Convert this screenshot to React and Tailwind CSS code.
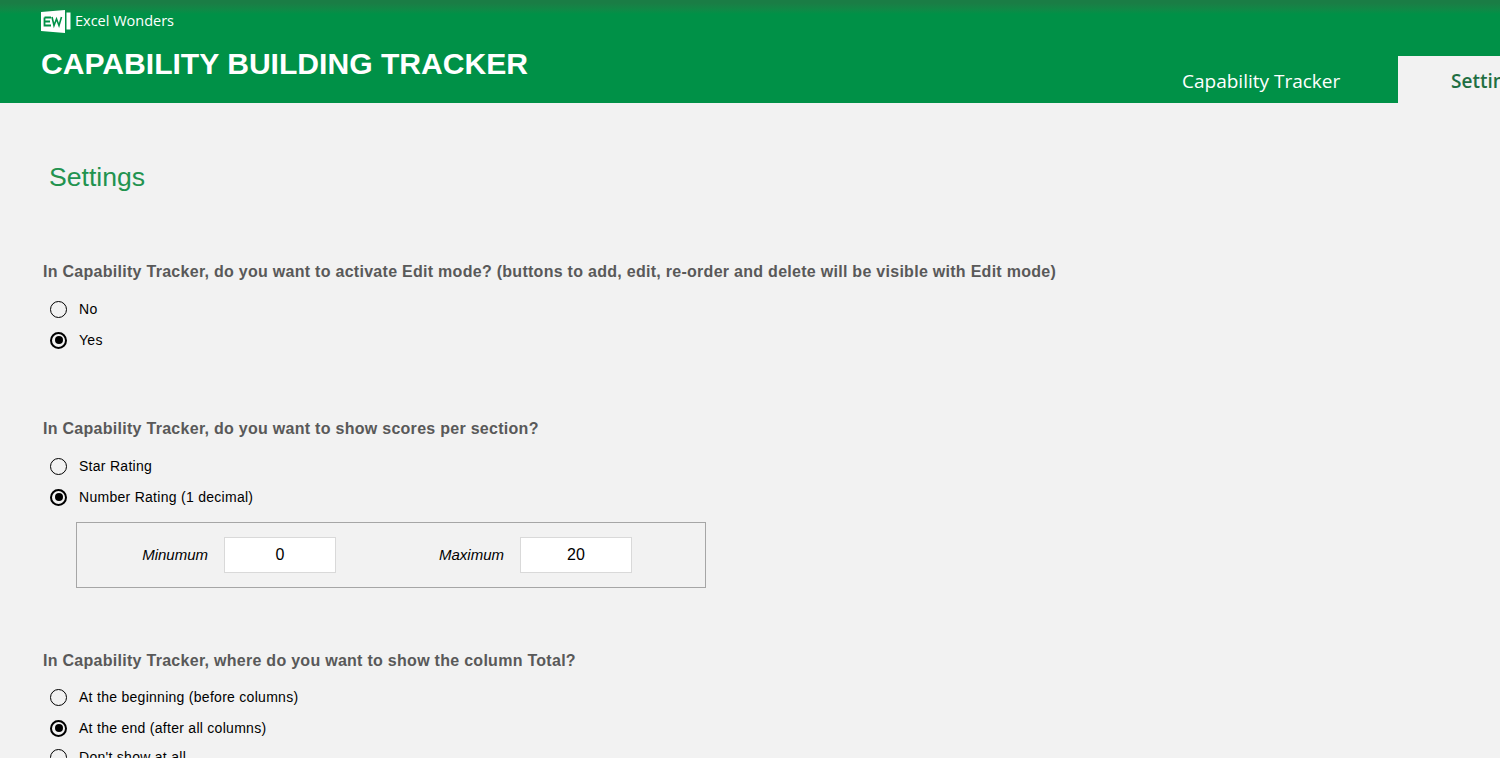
const font = { fontFamily: '"Liberation Sans", Arial, sans-serif' };

function Radio({ label, checked }) {
  return (
    <div className="flex items-center h-[20px]">
      <span
        className={`w-[17px] h-[17px] rounded-full border-black flex items-center justify-center ${checked ? 'border-2' : 'border-[1.5px]'}`}
      >
        {checked && <span className="w-[8px] h-[8px] rounded-full bg-black" />}
      </span>
      <span className="ml-[12px] text-[14px] tracking-[0.28px] leading-[20px] text-black">{label}</span>
    </div>
  );
}

function RadioGroup({ options, selected, className }) {
  return (
    <div className={`flex flex-col gap-[11px] pl-[50px] ${className}`}>
      {options.map((o) => (
        <Radio key={o} label={o} checked={o === selected} />
      ))}
    </div>
  );
}

function Question({ children, className }) {
  return (
    <h2 className={`pl-[43px] text-[16px] tracking-[0.28px] leading-[20px] font-bold text-[#595959] ${className}`}>
      {children}
    </h2>
  );
}

function NumberBox({ value }) {
  return (
    <div className="w-[112px] h-[36px] bg-white border border-[#d9d9d9] flex items-center justify-center not-italic text-[16px] text-black">
      {value}
    </div>
  );
}

export default function App() {
  return (
    <div className="w-[1500px] h-[758px] overflow-hidden bg-[#f2f2f2]" style={font}>
      <header className="h-[103px] bg-gradient-to-b from-[#1a7d45] from-[3px] to-[#009147] to-[14px] flex flex-col">
        <div className="flex items-center pl-[41px] pt-[9px] h-[33px]">
          <svg width="30" height="23" viewBox="0 0 30 23">
            <path d="M0 2 L24 0 V23 L0 21 Z" fill="#fff" />
            <path d="M25.5 2.5 H29.5 V19.5 H25.5 Z" fill="#fff" />
            <path d="M3.5 7.5 H10 M3.5 7.5 V15.5 H10 M3.5 11.5 H9" stroke="#009147" strokeWidth="1.8" fill="none" />
            <path d="M11 7 L13 15.5 L15.5 9 L18 15.5 L20.5 7" stroke="#009147" strokeWidth="1.6" fill="none" />
          </svg>
          <span className="ml-[4px] text-[14.5px] leading-[20px] text-white" style={{ fontFamily: '"Open Sans", sans-serif' }}>
            Excel Wonders
          </span>
        </div>
        <div className="flex flex-1 items-end justify-between">
          <h1 className="pl-[41px] pb-[21px] text-[30.1px] leading-[36px] font-bold text-white">CAPABILITY BUILDING TRACKER</h1>
          <nav className="flex h-[47px] w-[318px] shrink-0 text-[19px]" style={{ fontFamily: '"Open Sans", sans-serif' }}>
            <div className="w-[216px] pt-[11px] flex items-start text-white">Capability Tracker</div>
            <div className="flex-1 bg-[#f2f2f2] pl-[53px] pt-[11px] flex items-start font-semibold text-[#1f6f43] overflow-hidden whitespace-nowrap">
              Settings
            </div>
          </nav>
        </div>
      </header>

      <main>
        <h2 className="pl-[49px] mt-[56px] text-[26.6px] leading-[36px] text-[#22934f]">Settings</h2>

        <Question className="mt-[67px]">
          In Capability Tracker, do you want to activate Edit mode? (buttons to add, edit, re-order and delete will be visible with Edit mode)
        </Question>
        <RadioGroup className="mt-[17px]" options={['No', 'Yes']} selected="Yes" />

        <Question className="mt-[69px]">In Capability Tracker, do you want to show scores per section?</Question>
        <RadioGroup className="mt-[17px]" options={['Star Rating', 'Number Rating (1 decimal)']} selected="Number Rating (1 decimal)" />

        <div className="ml-[76px] mt-[15px] w-[630px] h-[66px] border border-[#a6a6a6] flex items-center italic text-[15px] text-black">
          <span className="w-[131px] text-right">Minumum</span>
          <span className="ml-[16px]"><NumberBox value="0" /></span>
          <span className="w-[168px] text-right">Maximum</span>
          <span className="ml-[16px]"><NumberBox value="20" /></span>
        </div>

        <Question className="mt-[63px]">In Capability Tracker, where do you want to show the column Total?</Question>
        <RadioGroup
          className="mt-[16px]"
          options={['At the beginning (before columns)', 'At the end (after all columns)']}
          selected="At the end (after all columns)"
        />
        <div className="pl-[50px] mt-[9px]">
          <Radio label="Don't show at all" />
        </div>
      </main>
    </div>
  );
}
